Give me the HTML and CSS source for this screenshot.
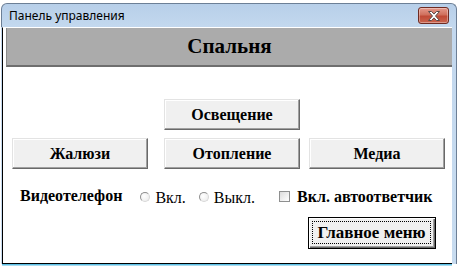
FILE: index.html
```html
<!DOCTYPE html>
<html lang="ru">
<head>
<meta charset="utf-8">
<title>Панель управления</title>
<link rel="stylesheet" href="styles.css">
</head>
<body>
<div class="window">
  <div class="titlebar">
    <span class="title">Панель управления</span>
    <div class="close">
      <svg width="14" height="10" viewBox="0 0 14 10"><path d="M1.5 0.5h3l2.5 2.6 2.5-2.6h3l-4 4.5 4 4.5h-3l-2.5-2.6-2.5 2.6h-3l4-4.5z" fill="#fff" stroke="#5a4a4a" stroke-width="1" stroke-linejoin="round"/></svg>
    </div>
  </div>
  <div class="frame">
    <div class="client">
      <div class="header">Спальня</div>
      <div class="row row1">
        <button class="btn">Освещение</button>
      </div>
      <div class="row row2">
        <button class="btn">Жалюзи</button>
        <button class="btn">Отопление</button>
        <button class="btn">Медиа</button>
      </div>
      <div class="row options">
        <span class="opt-label">Видеотелефон</span>
        <span class="radio"></span><span class="radio-label">Вкл.</span>
        <span class="radio"></span><span class="radio-label">Выкл.</span>
        <span class="check"></span><span class="check-label">Вкл. автоответчик</span>
      </div>
      <div class="row footer">
        <button class="btn default"><span class="focus">Главное меню</span></button>
      </div>
    </div>
  </div>
</div>
</body>
</html>
```
FILE: styles.css
```css
html, body {
  margin: 0;
  padding: 0;
  background: #ffffff;
  width: 458px;
  height: 271px;
  overflow: hidden;
}

.window {
  margin: 3px 0 0 1px;
  width: 456px;
}

.titlebar {
  box-sizing: border-box;
  height: 24px;
  border: 1px solid #6c7f96;
  border-bottom: none;
  border-radius: 6px 6px 0 0;
  background: linear-gradient(#b7cfe9, #c3d8ee);
  display: flex;
  align-items: flex-start;
  padding: 0 7px 0 7px;
}

.title {
  font-family: "Noto Sans", sans-serif;
  font-size: 12px;
  line-height: 16px;
  margin-top: 4px;
  color: #000;
  flex: 1;
}

.close {
  box-sizing: border-box;
  width: 31px;
  height: 17px;
  margin-top: 3px;
  border: 1px solid #6e2b22;
  border-radius: 3px;
  background: linear-gradient(#e4998b 0%, #d0705d 45%, #c04a36 55%, #c9654f 100%);
  box-shadow: inset 0 0 0 1px rgba(255,255,255,0.35);
  display: flex;
  align-items: center;
  justify-content: center;
}

.frame {
  display: flex;
  background: linear-gradient(#c3d8ee, #c8dcf0);
  padding-right: 4px;
  border-right: 1px solid #6c7f96;
}

.client {
  box-sizing: border-box;
  width: 451px;
  height: 237px;
  margin-left: 1px;
  background: #ffffff;
  border-left: 1px solid #000;
  border-bottom: 1px solid #000;
  border-top: 1px solid #ffffff;
  padding: 0 0 0 3px;
  font-family: "Liberation Serif", "Times New Roman", serif;
  color: #000;
  box-shadow: 0 1px 0 #5cc0e6, 0 2px 0 #a9dcf0;
}

.header {
  box-sizing: border-box;
  height: 39px;
  background: #ababab;
  border-left: 1px solid #8a8a8a;
  border-bottom: 2px solid #6e6e6e;
  font-weight: bold;
  font-size: 21px;
  line-height: 37px;
  text-align: center;
}

.row {
  display: flex;
}

.btn {
  box-sizing: border-box;
  height: 31px;
  width: 136px;
  padding: 0;
  margin: 0;
  font-family: "Liberation Serif", "Times New Roman", serif;
  font-weight: bold;
  font-size: 16px;
  color: #000;
  background: #f0f0f0;
  border: 1px solid;
  border-color: #e3e3e3 #696969 #696969 #e3e3e3;
  box-shadow: inset -1px -1px 0 #a0a0a0, inset 1px 1px 0 #ffffff;
  border-radius: 0;
}

.row1 {
  margin-top: 32px;
  padding-left: 158px;
}

.row2 {
  margin-top: 8px;
  padding-left: 6px;
}

.row2 .btn + .btn {
  margin-left: 16px;
}

.row2 .btn:last-child {
  margin-left: 9px;
}

.options {
  margin-top: 18px;
  height: 18px;
  padding-left: 14px;
  align-items: flex-start;
  font-size: 16px;
  line-height: 18px;
}

.opt-label {
  font-weight: bold;
  margin-top: 0;
}

.radio {
  box-sizing: border-box;
  width: 10px;
  height: 10px;
  border-radius: 50%;
  border: 1px solid;
  border-color: #8f8f8f #d8d8d8 #d8d8d8 #8f8f8f;
  background: radial-gradient(circle at 40% 40%, #ffffff 0%, #f2f2f2 60%, #e2e2e2 100%);
  margin-top: 5px;
}

.opt-label + .radio {
  margin-left: 18px;
}

.radio-label {
  margin-left: 5px;
  margin-top: 2px;
}

.radio-label + .radio {
  margin-left: 13px;
}

.check {
  box-sizing: border-box;
  width: 11px;
  height: 11px;
  border: 1px solid #8e8f8f;
  background: linear-gradient(135deg, #dcdcdc, #ffffff);
  margin-left: 24px;
  margin-top: 4px;
}

.check-label {
  font-weight: bold;
  margin-left: 7px;
  margin-top: 1px;
}

.footer {
  margin-top: 12px;
  padding-left: 302px;
}

.btn.default {
  width: 128px;
  height: 32px;
  border: 1px solid #000;
  box-shadow: inset 1px 1px 0 #ffffff, inset -1px -1px 0 #696969, inset -2px -2px 0 #a0a0a0;
  padding: 3px 4px 4px 3px;
  display: flex;
}

.focus {
  flex: 1;
  border: 1px dotted #000;
  display: flex;
  align-items: center;
  justify-content: center;
  font-size: 17px;
}
```
